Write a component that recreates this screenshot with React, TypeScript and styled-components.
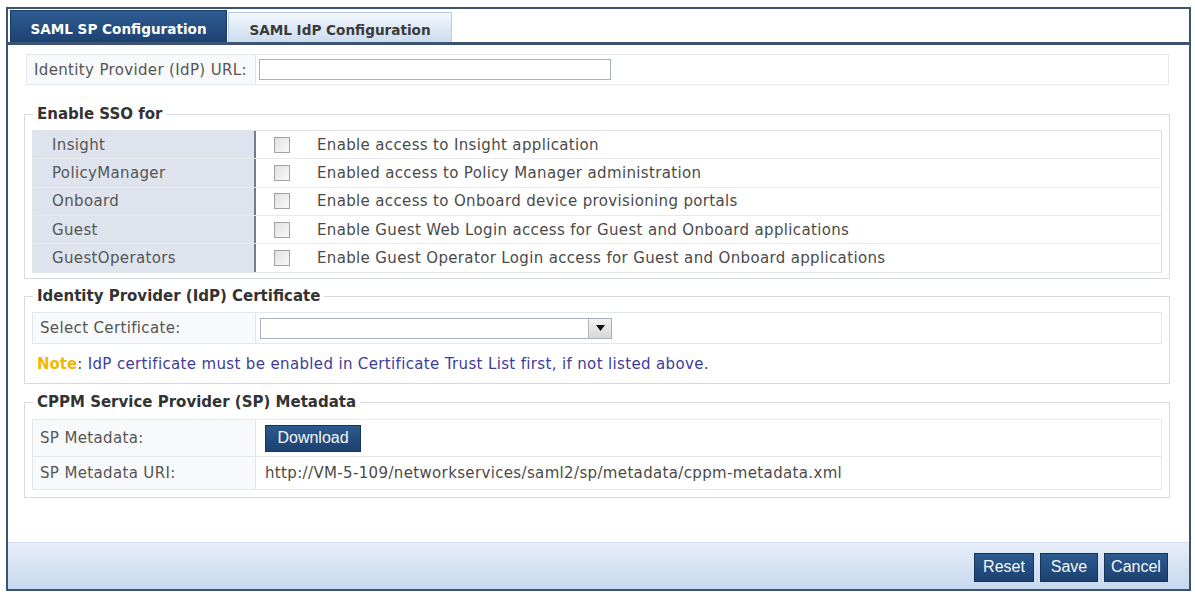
import styled, { createGlobalStyle } from "styled-components";

const GlobalStyle = createGlobalStyle`
  html, body {
    margin: 0;
    padding: 0;
    background: #ffffff;
  }
  body {
    font-family: "DejaVu Sans", Verdana, sans-serif;
    font-size: 15px;
    letter-spacing: 0.35px;
    color: #4d4d4d;
  }
`;

const ssoRows = [
  { name: "Insight", text: "Enable access to Insight application" },
  { name: "PolicyManager", text: "Enabled access to Policy Manager administration" },
  { name: "Onboard", text: "Enable access to Onboard device provisioning portals" },
  { name: "Guest", text: "Enable Guest Web Login access for Guest and Onboard applications" },
  { name: "GuestOperators", text: "Enable Guest Operator Login access for Guest and Onboard applications" },
];

export default function App() {
  return (
    <>
      <GlobalStyle />
      <Page>
        <Frame>
          <TabBar>
            <Tab active>SAML SP Configuration</Tab>
            <Tab>SAML IdP Configuration</Tab>
          </TabBar>
          <Content>
            <UrlRow>
              <LabelCell width={229}>Identity Provider (IdP) URL:</LabelCell>
              <TextInput />
            </UrlRow>

            <Group>
              <Legend>Enable SSO for</Legend>
              <SsoTable>
                {ssoRows.map((r, i) => (
                  <SsoRow key={r.name} last={i === ssoRows.length - 1}>
                    <SsoName>{r.name}</SsoName>
                    <SsoValue>
                      <Checkbox />
                      <span>{r.text}</span>
                    </SsoValue>
                  </SsoRow>
                ))}
              </SsoTable>
            </Group>

            <Group gap={8} top={7}>
              <Legend>Identity Provider (IdP) Certificate</Legend>
              <BoxRow height={32}>
                <LabelCell width={223}>Select Certificate:</LabelCell>
                <Select>
                  <SelectArrow>
                    <svg width="9" height="6" viewBox="0 0 9 6">
                      <path d="M0 0 H9 L4.5 6 Z" fill="#111" />
                    </svg>
                  </SelectArrow>
                </Select>
              </BoxRow>
              <Note>
                <b>Note</b>: IdP certificate must be enabled in Certificate Trust List first, if not listed above.
              </Note>
            </Group>

            <Group gap={9} bottom={7}>
              <Legend>CPPM Service Provider (SP) Metadata</Legend>
              <MetaBox>
                <BoxRow height={37} inner>
                  <LabelCell width={223}>SP Metadata:</LabelCell>
                  <ValueCell>
                    <BlueButton width={96}>Download</BlueButton>
                  </ValueCell>
                </BoxRow>
                <BoxRow height={32} inner last>
                  <LabelCell width={223}>SP Metadata URI:</LabelCell>
                  <ValueCell>http://VM-5-109/networkservices/saml2/sp/metadata/cppm-metadata.xml</ValueCell>
                </BoxRow>
              </MetaBox>
            </Group>
          </Content>
          <Footer>
            <BlueButton width={60} tall>Reset</BlueButton>
            <BlueButton width={58} tall>Save</BlueButton>
            <BlueButton width={64} tall>Cancel</BlueButton>
          </Footer>
        </Frame>
      </Page>
    </>
  );
}

const Page = styled.div`
  padding: 7px 0 0 6px;
`;

const Frame = styled.div`
  width: 1185px;
  height: 584px;
  box-sizing: border-box;
  border: 2px solid #3c5472;
  display: flex;
  flex-direction: column;
  background: #ffffff;
`;

const TabBar = styled.div`
  height: 33px;
  display: flex;
  align-items: flex-end;
  padding-left: 2px;
  border-bottom: 3px solid #3c5472;
  background: #ffffff;
`;

const Tab = styled.div<{ active?: boolean }>`
  box-sizing: border-box;
  width: ${(p) => (p.active ? 217 : 224)}px;
  height: ${(p) => (p.active ? 32 : 30)}px;
  margin-left: ${(p) => (p.active ? 0 : 1)}px;
  display: flex;
  align-items: center;
  justify-content: center;
  padding-top: 4px;
  font-size: 13.6px;
  font-weight: bold;
  letter-spacing: 0;
  color: ${(p) => (p.active ? "#ffffff" : "#3a3a3a")};
  background: ${(p) =>
    p.active
      ? "linear-gradient(#2d5c92, #1d4272)"
      : "linear-gradient(#f3f8fd, #cbdcef)"};
  border: 1px solid ${(p) => (p.active ? "#1a3a63" : "#b9cbe0")};
  border-bottom: none;
`;

const Content = styled.div`
  flex: 1;
  padding: 9px 19px 0 16px;
`;

const UrlRow = styled.div`
  display: flex;
  align-items: stretch;
  height: 31px;
  box-sizing: border-box;
  margin: 0 1px 0 2px;
  border: 1px solid #e3e6ea;
`;

const LabelCell = styled.div<{ width: number }>`
  width: ${(p) => p.width}px;
  flex-shrink: 0;
  box-sizing: border-box;
  display: flex;
  align-items: center;
  padding-left: 7px;
  background: #f8f9fa;
  border-right: 1px solid #e3e6ea;
  color: #555555;
`;

const TextInput = styled.div`
  align-self: center;
  margin-left: 3px;
  width: 352px;
  height: 21px;
  box-sizing: border-box;
  border: 1px solid #a7b1bd;
  background: #ffffff;
`;

const Group = styled.fieldset<{ gap?: number; top?: number; bottom?: number }>`
  margin: ${(p) => p.gap ?? 20}px 0 0;
  padding: ${(p) => p.top ?? 7}px 7px ${(p) => p.bottom ?? 5}px;
  border: 1px solid #d6d9de;
  min-width: 0;
`;

const Legend = styled.legend`
  margin-left: 1px;
  padding: 0 4px;
  font-weight: bold;
  font-size: 15px;
  line-height: 18px;
  letter-spacing: 0;
  color: #333333;
`;

const SsoTable = styled.div`
  border: 1px solid #e1e4e9;
  border-right-color: #d9dce1;
`;

const SsoRow = styled.div<{ last?: boolean }>`
  display: grid;
  grid-template-columns: 223px 1fr;
  height: 28.3px;
  box-sizing: border-box;
  border-bottom: ${(p) => (p.last ? "none" : "1px solid #e8eaee")};
`;

const SsoName = styled.div`
  display: flex;
  align-items: center;
  padding-left: 19px;
  background: #dee3ee;
  border-right: 2px solid #717d8c;
  color: #555555;
`;

const SsoValue = styled.div`
  display: flex;
  align-items: center;
  padding-left: 18px;
  gap: 27px;
  color: #4a4a4a;
`;

const Checkbox = styled.span`
  width: 16px;
  height: 16px;
  box-sizing: border-box;
  border: 1px solid #a3a3a3;
  background: linear-gradient(135deg, #e0e0e0, #f9f9f9);
  flex-shrink: 0;
`;

const BoxRow = styled.div<{ height: number; inner?: boolean; last?: boolean }>`
  display: flex;
  align-items: stretch;
  height: ${(p) => p.height}px;
  box-sizing: border-box;
  border: ${(p) => (p.inner ? "none" : "1px solid #e3e6ea")};
  border-bottom: ${(p) => (p.last ? "none" : "1px solid #e3e6ea")};
`;

const Select = styled.div`
  position: relative;
  align-self: center;
  margin-left: 4px;
  width: 352px;
  height: 21px;
  box-sizing: border-box;
  border: 1px solid #a7b1bd;
  background: #ffffff;
`;

const SelectArrow = styled.div`
  position: absolute;
  right: 0;
  top: 0;
  bottom: 0;
  width: 22px;
  display: flex;
  align-items: center;
  justify-content: center;
  background: linear-gradient(#f2f2f2, #d8d8d8);
  border-left: 1px solid #b5b5b5;
`;

const Note = styled.div`
  margin: 11px 0 0;
  padding: 0 0 5px 5px;
  line-height: 18px;
  font-size: 15px;
  color: #3c3c9c;
  b {
    color: #f2b705;
    font-weight: bold;
    letter-spacing: 0;
  }
`;

const MetaBox = styled.div`
  border: 1px solid #e3e6ea;
  margin-top: 1px;
`;

const ValueCell = styled.div`
  display: flex;
  align-items: center;
  padding-left: 9px;
  color: #4a4a4a;
`;

const BlueButton = styled.button<{ width: number; tall?: boolean }>`
  font-family: "Liberation Sans", Arial, sans-serif;
  font-size: 16px;
  letter-spacing: 0;
  color: #f4f7fb;
  width: ${(p) => p.width}px;
  height: ${(p) => (p.tall ? 29 : 27)}px;
  padding: 0;
  border: 1px solid #173459;
  background: linear-gradient(#2c5a8f, #1c416f);
  cursor: pointer;
`;

const Footer = styled.div`
  height: 47px;
  box-sizing: border-box;
  display: flex;
  align-items: center;
  justify-content: flex-end;
  gap: 6px;
  padding: 2px 21px 0 0;
  border-top: 1px solid #d3deec;
  background: linear-gradient(#e7eef8, #c6d7ef);
`;
